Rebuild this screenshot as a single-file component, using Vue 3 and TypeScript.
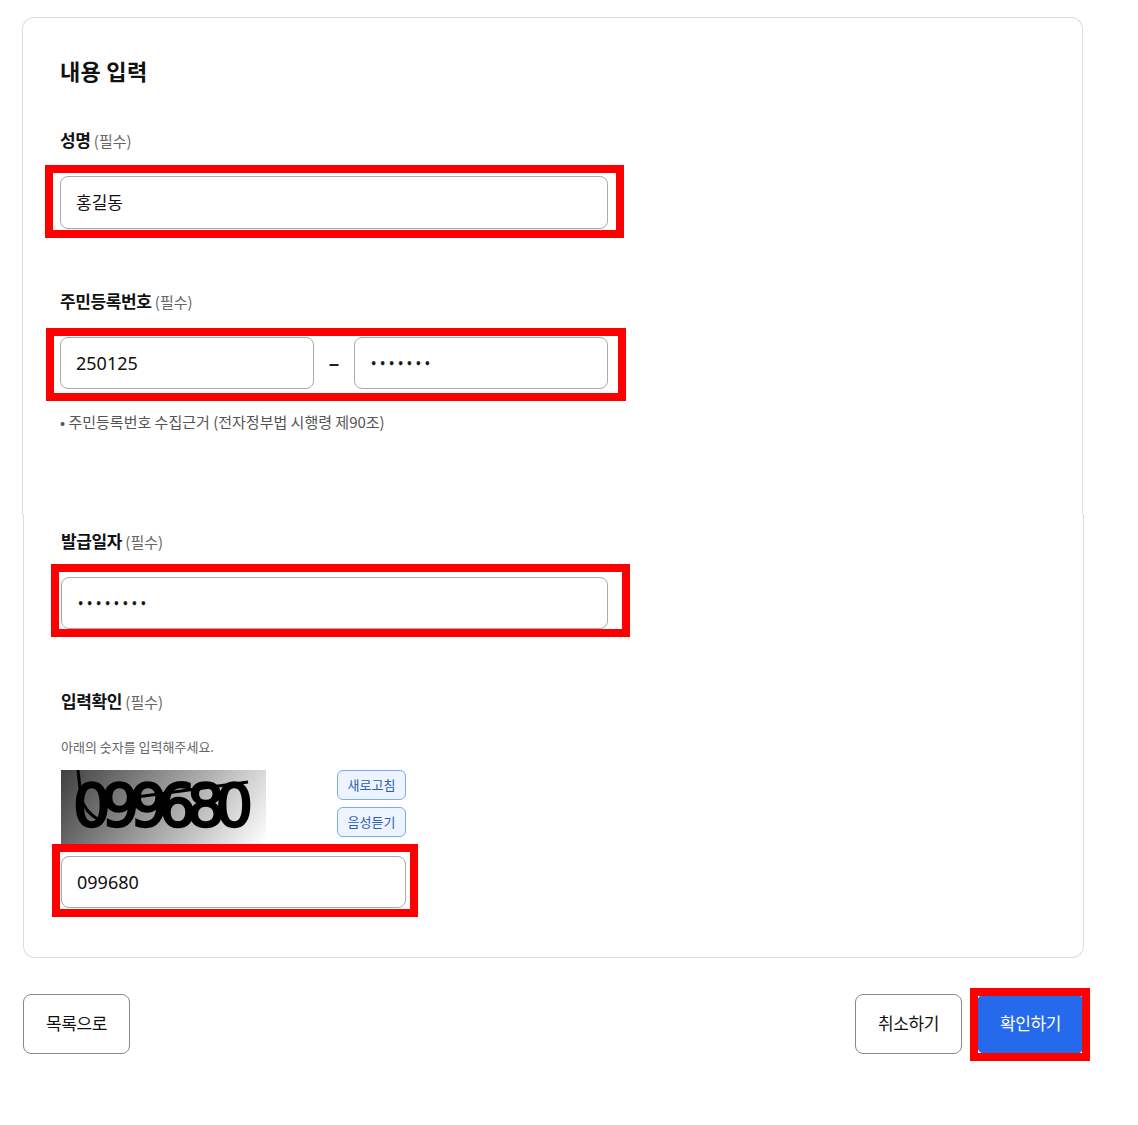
<script setup lang="ts">
const required = '(필수)'
</script>

<template>
  <main class="page">
    <section class="panel panel-top">
      <h2 class="title">내용 입력</h2>

      <div class="label first"><b>성명</b> <span>{{ required }}</span></div>
      <div class="marked ring-a">
        <input class="field" type="text" value="홍길동" readonly />
      </div>

      <div class="label next"><b>주민등록번호</b> <span>{{ required }}</span></div>
      <div class="marked ring-b id-row">
        <input class="field num" type="text" value="250125" readonly />
        <span class="dash">–</span>
        <input class="field dots" type="password" value="1234567" readonly />
      </div>
      <p class="hint">• 주민등록번호 수집근거 (전자정부법 시행령 제90조)</p>
    </section>

    <section class="panel panel-bottom">
      <div class="label"><b>발급일자</b> <span>{{ required }}</span></div>
      <div class="marked ring-c">
        <input class="field dots" type="password" value="12345678" readonly />
      </div>

      <div class="label next"><b>입력확인</b> <span>{{ required }}</span></div>
      <p class="small">아래의 숫자를 입력해주세요.</p>
      <div class="captcha-block">
        <div class="captcha-row">
          <svg class="captcha" width="205" height="74" viewBox="0 0 205 74">
            <defs>
              <linearGradient id="cg" gradientUnits="userSpaceOnUse" x1="0" y1="0" x2="173" y2="120">
                <stop offset="0" stop-color="#3f3f3f" />
                <stop offset="1" stop-color="#ffffff" />
              </linearGradient>
              <filter id="soft"><feGaussianBlur stdDeviation="0.7" /></filter>
            </defs>
            <rect width="205" height="74" fill="url(#cg)" />
            <g filter="url(#soft)">
              <text x="12" y="56" font-family="DejaVu Sans" font-size="59" textLength="180" lengthAdjust="spacing" stroke="#000" stroke-width="2.4">099680</text>
              <path d="M17 0 L20 28 Q24 42 38 50" fill="none" stroke="#000" stroke-width="3" />
              <path d="M68 28 L187 12" fill="none" stroke="#000" stroke-width="3" />
            </g>
          </svg>
          <div class="captcha-btns">
            <button class="mini">새로고침</button>
            <button class="mini">음성듣기</button>
          </div>
        </div>
        <div class="marked ring-d">
          <input class="field num" type="text" value="099680" readonly />
        </div>
      </div>
    </section>

    <div class="actions">
      <button class="btn">목록으로</button>
      <div class="actions-right">
        <button class="btn">취소하기</button>
        <div class="marked ring-e">
          <button class="btn primary">확인하기</button>
        </div>
      </div>
    </div>
  </main>
</template>

<style>
html, body { margin: 0; background: #fff; }
</style>

<style scoped>
.page {
  width: 1138px;
  height: 1125px;
  overflow: hidden;
  box-sizing: border-box;
  padding-top: 17px;
  font-family: "Noto Sans", "Noto Sans CJK KR", sans-serif;
  color: #111;
}
.panel {
  box-sizing: border-box;
  width: 1061px;
  background: #fff;
  border: 1px solid #dcdcdc;
}
.panel-top {
  height: 497px;
  margin-left: 22px;
  padding: 37px 0 0 37px;
  border-bottom: 0;
  border-radius: 12px 12px 0 0;
}
.panel-bottom {
  height: 444px;
  margin-left: 23px;
  padding: 15px 0 0 37px;
  border-top: 0;
  border-radius: 0 0 12px 12px;
}
.title {
  margin: 0;
  font-size: 22px;
  line-height: 30px;
  font-weight: 700;
  letter-spacing: 0.3px;
  font-family: "Noto Sans CJK KR", sans-serif;
}
.label {
  height: 24px;
  line-height: 23px;
  margin-bottom: 24px;
  font-size: 15px;
  color: #666;
  font-family: "Noto Sans CJK KR", sans-serif;
}
.label b {
  font-size: 17px;
  color: #111;
  font-weight: 700;
  letter-spacing: -0.4px;
}
.label.first { margin-top: 43px; }
.label.next { margin-top: 60px; }
.marked { position: relative; width: 548px; }
.marked::after {
  content: "";
  position: absolute;
  border: 8px solid #ff0000;
  pointer-events: none;
}
.ring-a::after { top: -11px; bottom: -9px; left: -15px; right: -16px; }
.ring-b::after { top: -9px; bottom: -12px; left: -14px; right: -18px; }
.ring-c::after { top: -13px; bottom: -8px; left: -10px; right: -21px; }
.ring-d::after { top: -12px; bottom: -9px; left: -9px; right: -12px; }
.ring-e::after { top: -6px; bottom: -7px; left: -7px; right: -6px; }
.field {
  display: block;
  box-sizing: border-box;
  width: 100%;
  height: 52px;
  padding: 0 15px;
  border: 1px solid #aaa;
  border-radius: 8px;
  background: #fff;
  color: #111;
  font-family: "Noto Sans", "Noto Sans CJK KR", sans-serif;
  font-size: 17px;
  outline: none;
}
.ring-a .field { height: 53px; padding-bottom: 2px; }
.num { font-size: 18px; }
.dots { padding-left: 16px; letter-spacing: 3.7px; font-size: 14px; -webkit-text-stroke: 0.4px #111; }
.ring-c .field { width: 547px; }
.id-row {
  display: flex;
  align-items: center;
  justify-content: space-between;
}
.id-row .field { width: 254px; }
.dash { font-size: 21px; font-weight: 500; line-height: 1; color: #222; }
.hint {
  margin: 23px 0 0;
  font-size: 15px;
  line-height: 20px;
  color: #555;
  font-family: "Noto Sans CJK KR", sans-serif;
}
.small {
  margin: 0;
  height: 20px;
  font-size: 13px;
  line-height: 20px;
  color: #666;
  font-family: "Noto Sans CJK KR", sans-serif;
}
.captcha-block { width: 345px; margin-top: 13px; }
.captcha-block .marked { width: 345px; margin-top: 12px; }
.captcha-row { display: flex; height: 74px; gap: 71px; }
.captcha { display: block; flex: none; }
.captcha-btns { display: flex; flex-direction: column; gap: 7px; }
.mini {
  width: 69px;
  height: 30px;
  padding: 0 0 2px;
  border: 1px solid #7ba8f3;
  border-radius: 6px;
  background: #eef4ff;
  color: #2b5cb5;
  font-size: 13px;
  font-family: "Noto Sans CJK KR", sans-serif;
  letter-spacing: 0.1px;
}
.actions {
  width: 1061px;
  margin: 36px 0 0 23px;
  display: flex;
  justify-content: space-between;
}
.actions-right { display: flex; gap: 15px; }
.actions-right .marked { width: 107px; }
.btn {
  display: block;
  box-sizing: border-box;
  width: 107px;
  height: 60px;
  padding: 0 0 3px;
  border: 1px solid #888;
  border-radius: 8px;
  background: #fff;
  color: #111;
  font-size: 17px;
  letter-spacing: -0.4px;
  font-family: "Noto Sans CJK KR", sans-serif;
}
.primary { background: #2569ed; border-color: #2569ed; color: #fff; }
</style>
